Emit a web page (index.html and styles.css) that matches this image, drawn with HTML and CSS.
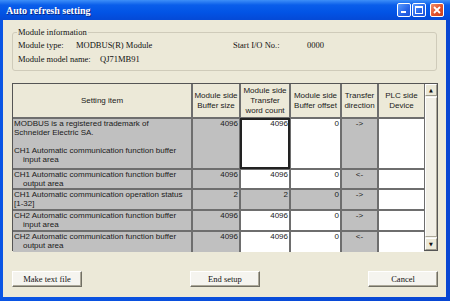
FILE: index.html
```html
<!DOCTYPE html>
<html lang="en">
<head>
    <meta charset="UTF-8">
    <title>Auto refresh setting</title>
    <link rel="stylesheet" href="styles.css">
</head>
<body>
    <div class="window">
        <div class="titlebar">
            <span class="title">Auto refresh setting</span>
            <div class="controls">
                <span class="ctl min"><span class="bar"></span></span>
                <span class="ctl max"><span class="box"></span></span>
                <span class="ctl close">
                    <svg width="8" height="8" viewBox="0 0 8 8"><path d="M1 1L7 7M7 1L1 7" stroke="#fff" stroke-width="1.8"/></svg>
                </span>
            </div>
        </div>

        <div class="body">
            <fieldset class="group">
                <legend>Module information</legend>
                <div class="info-row">
                    <span class="lbl-type">Module type:</span>
                    <span class="val-type">MODBUS(R) Module</span>
                    <span class="lbl-start">Start I/O No.:</span>
                    <span>0000</span>
                </div>
                <div class="info-row">
                    <span class="lbl-model">Module model name:</span>
                    <span>QJ71MB91</span>
                </div>
            </fieldset>

            <div class="grid">
                <table>
                    <colgroup>
                        <col style="width: 179px">
                        <col style="width: 48px">
                        <col style="width: 50px">
                        <col style="width: 51px">
                        <col style="width: 37px">
                        <col style="width: 46px">
                    </colgroup>
                    <tr class="head">
                        <th>Setting item</th>
                        <th>Module side<br>Buffer size</th>
                        <th>Module side<br>Transfer<br>word count</th>
                        <th>Module side<br>Buffer offset</th>
                        <th>Transfer<br>direction</th>
                        <th>PLC side<br>Device</th>
                    </tr>
                    <tr class="tall">
                        <td class="item">MODBUS is a registered trademark of<br>Schneider Electric SA.<br><br>CH1 Automatic communication function buffer<span class="indent">input area</span></td>
                        <td class="num gray">4096</td>
                        <td class="num edit selected">4096</td>
                        <td class="num edit">0</td>
                        <td class="dir gray">-&gt;</td>
                        <td class="edit"></td>
                    </tr>
                    <tr class="r19">
                        <td class="item">CH1 Automatic communication function buffer<span class="indent">output area</span></td>
                        <td class="num gray">4096</td>
                        <td class="num edit">4096</td>
                        <td class="num edit">0</td>
                        <td class="dir gray">&lt;-</td>
                        <td class="edit"></td>
                    </tr>
                    <tr class="r21">
                        <td class="item">CH1 Automatic communication operation status<br>[1-32]</td>
                        <td class="num gray">2</td>
                        <td class="num gray">2</td>
                        <td class="num gray">0</td>
                        <td class="dir gray">-&gt;</td>
                        <td class="edit"></td>
                    </tr>
                    <tr class="r21">
                        <td class="item">CH2 Automatic communication function buffer<span class="indent">input area</span></td>
                        <td class="num gray">4096</td>
                        <td class="num edit">4096</td>
                        <td class="num edit">0</td>
                        <td class="dir gray">-&gt;</td>
                        <td class="edit"></td>
                    </tr>
                    <tr class="r21">
                        <td class="item">CH2 Automatic communication function buffer<span class="indent">output area</span></td>
                        <td class="num gray">4096</td>
                        <td class="num edit">4096</td>
                        <td class="num edit">0</td>
                        <td class="dir gray">&lt;-</td>
                        <td class="edit"></td>
                    </tr>
                </table>
                <div class="scrollbar">
                    <div class="arrow">&#9650;</div>
                    <div class="track"><div class="thumb"></div></div>
                    <div class="arrow">&#9660;</div>
                </div>
            </div>

            <div class="buttons">
                <button class="btn">Make text file</button>
                <button class="btn">End setup</button>
                <button class="btn">Cancel</button>
            </div>
        </div>
    </div>
</body>
</html>
```

FILE: styles.css
```css
* {
    box-sizing: border-box;
}
body {
    margin: 0;
    background: #0a4bd6;
}
.window {
    width: 450px;
    height: 301px;
    display: flex;
    flex-direction: column;
    background: linear-gradient(90deg, #0a55e4, #0846d2);
}
.titlebar {
    height: 20px;
    display: flex;
    align-items: center;
    padding: 0 6px 0 6px;
    background: linear-gradient(#3e8ff8, #0a5eea 25%, #0254e6 60%, #0449d6);
}
.title {
    flex: 1;
    color: #fff;
    font: bold 10px "Liberation Serif", serif;
    text-shadow: 1px 1px 0 #0a2a8a;
}
.controls {
    display: flex;
    gap: 1px;
}
.ctl {
    width: 14px;
    height: 14px;
    border: 1px solid #fff;
    border-radius: 2px;
    background: linear-gradient(135deg, #5a9cff, #2664e8 60%, #1e54d8);
    display: flex;
    align-items: center;
    justify-content: center;
    position: relative;
}
.ctl.close {
    margin-left: 3px;
    background: linear-gradient(135deg, #f0906a, #e0502a 55%, #c8401e);
}
.bar {
    position: absolute;
    left: 3px;
    bottom: 3px;
    width: 5px;
    height: 2px;
    background: #fff;
}
.box {
    width: 8px;
    height: 8px;
    border: 1px solid #fff;
    border-top-width: 2px;
}
.body {
    flex: 1;
    margin: 0 4px 4px 3px;
    padding: 6px 8px 0 9px;
    background: #ece9d8;
    font: 8.5px "Liberation Serif", serif;
    color: #111;
}
.group {
    margin: 0;
    padding: 0 4px 4px 4px;
    border: 1px solid #cfcbba;
    border-radius: 3px;
    width: 425px;
}
.group legend {
    padding: 0 1px;
    line-height: 12px;
}
.info-row {
    display: flex;
    line-height: 14px;
    padding-left: 1px;
}
.lbl-type {
    width: 58px;
}
.val-type {
    width: 157px;
}
.lbl-start {
    width: 74px;
}
.lbl-model {
    width: 82px;
}
.grid {
    margin-top: 12px;
    width: 426px;
    height: 168px;
    display: flex;
    border: 1px solid #555;
}
table {
    width: 411px;
    table-layout: fixed;
    border-collapse: collapse;
    border-style: hidden;
    font: 8px "Liberation Sans", Arial, sans-serif;
    color: #1a1a1a;
}
th, td {
    border: 2px solid #6e6e6e;
    padding: 0 1px;
    line-height: 9.5px;
    overflow: hidden;
}
th {
    background: #ece9d8;
    font-weight: normal;
    text-align: center;
    vertical-align: middle;
    line-height: 10px;
}
tr.head {
    height: 34px;
}
tr.tall {
    height: 51px;
}
tr.r19 {
    height: 19px;
}
tr.r21 {
    height: 21px;
}
td {
    vertical-align: top;
    white-space: nowrap;
    line-height: 9px;
}
td.item {
    background: #c0c0c0;
    padding-left: 1px;
}
.indent {
    display: block;
    padding-left: 9px;
}
td.gray {
    background: #c0c0c0;
}
td.edit {
    background: #fff;
}
td.num {
    text-align: right;
    padding-right: 1px;
}
td.dir {
    text-align: center;
}
td.selected {
    outline: 2px solid #222;
    outline-offset: -2px;
}
.scrollbar {
    width: 13px;
    display: flex;
    flex-direction: column;
    background: #f4f3ee;
    border-left: 1px solid #6e6e6e;
}
.arrow {
    height: 12px;
    font: 5px "DejaVu Sans", sans-serif;
    text-align: center;
    line-height: 11px;
    color: #111;
    background: #ece9d8;
    border: 1px solid;
    border-color: #fff #9d9a8c #9d9a8c #fff;
}
.track {
    flex: 1;
    padding: 1px 0;
    display: flex;
}
.thumb {
    flex: 1;
    background: #f1efe6;
    border: 1px solid;
    border-color: #fff #aca899 #aca899 #fff;
}
.buttons {
    margin-top: 20px;
    width: 426px;
    display: flex;
    justify-content: space-between;
}
.btn {
    width: 70px;
    height: 16px;
    padding: 0;
    font: 8.5px "Liberation Serif", serif;
    color: #111;
    background: #f5f4ef;
    border: 1px solid;
    border-color: #fff #716f64 #716f64 #fff;
    box-shadow: inset -1px -1px 0 #aca899;
}
```
